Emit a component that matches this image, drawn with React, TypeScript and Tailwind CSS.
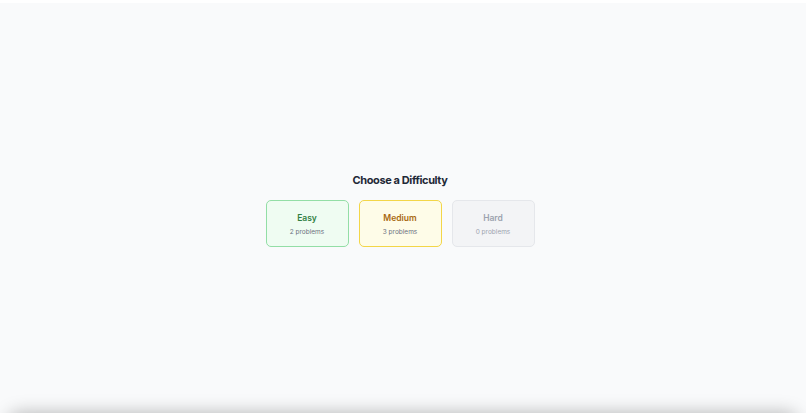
import React from "react";

const cards = [
  {
    name: "Easy",
    count: "2 problems",
    box: "border-[#93dea6] bg-[#effcf2]",
    title: "text-[#2f7f43]",
    sub: "text-[#6b7280]",
  },
  {
    name: "Medium",
    count: "3 problems",
    box: "border-[#f3d648] bg-[#fefce8]",
    title: "text-[#a8690f]",
    sub: "text-[#6b7280]",
  },
  {
    name: "Hard",
    count: "0 problems",
    box: "border-[#e5e7eb] bg-[#f3f4f6]",
    title: "text-[#9ca3af]",
    sub: "text-[#9ca3af]",
  },
];

export default function App() {
  return (
    <div
      className="h-[413px] w-full bg-white flex flex-col overflow-hidden"
      style={{ fontFamily: "Inter, 'Noto Sans', sans-serif" }}
    >
      <div className="relative mt-[3px] flex-1 bg-[#f9fafb] flex flex-col items-center justify-center overflow-hidden pr-[6px] pt-[3px]">
        <h1 className="text-[11px] leading-[15px] font-bold tracking-[-0.4px] text-[#1f2937] mb-[12px]">
          Choose a Difficulty
        </h1>
        <div className="flex gap-[10px]">
          {cards.map((c) => (
            <div
              key={c.name}
              className={`w-[83px] h-[47px] rounded-[5px] border flex flex-col items-center justify-center pt-[2px] ${c.box}`}
            >
              <div className={`text-[8.5px] leading-[11px] font-semibold ${c.title}`}>
                {c.name}
              </div>
              <div className={`mt-[4px] text-[6.5px] leading-[8px] ${c.sub}`}>
                {c.count}
              </div>
            </div>
          ))}
        </div>
        <div className="absolute left-[8px] right-[8px] bottom-[-24px] h-[24px] rounded-[20px] bg-[#f9fafb] shadow-[0_0_18px_rgba(0,0,0,0.28)]" />
      </div>
    </div>
  );
}
